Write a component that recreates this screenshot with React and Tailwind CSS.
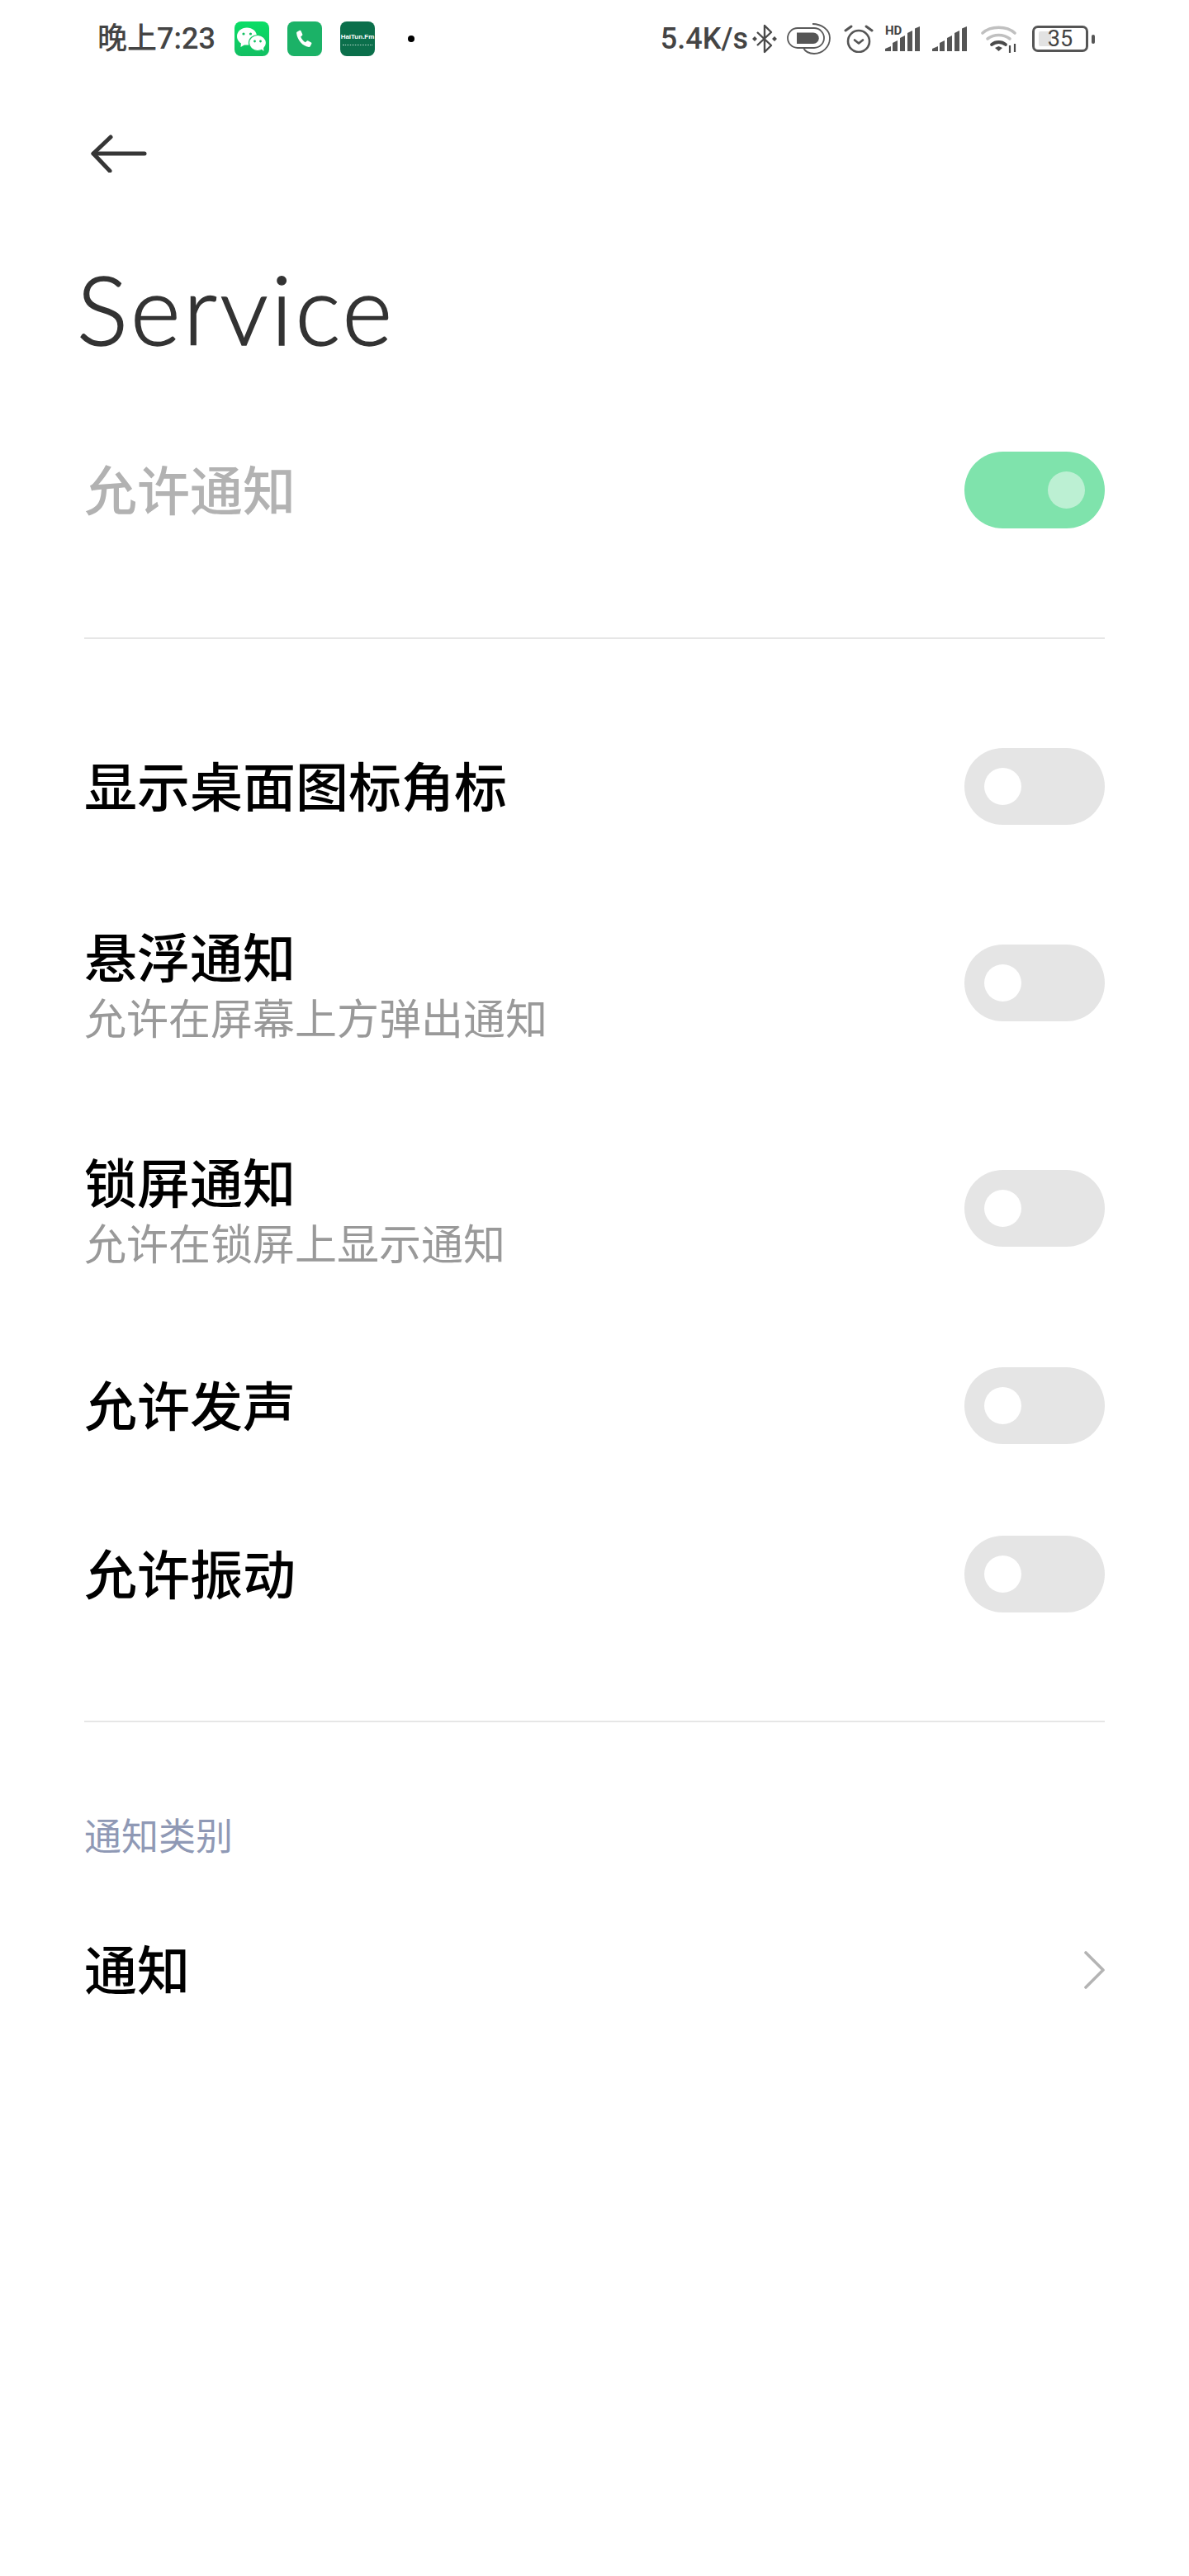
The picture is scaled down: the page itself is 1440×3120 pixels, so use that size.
const CJK = 'font-["Noto_Sans_CJK_SC",sans-serif]';

// Toggle: the first row is on and greyed out, all the others are off
const Toggle = ({ on }) => (
  <div
    className={`flex h-[93px] w-[170px] shrink-0 items-center rounded-full px-[24px] ${
      on ? 'justify-end bg-[#7fe3ac]' : 'justify-start bg-[#e5e5e5]'
    }`}
  >
    <div className={`h-[45px] w-[45px] rounded-full ${on ? 'bg-[#bcf0d3]' : 'bg-white'}`} />
  </div>
);

const Row = ({ title, sub, on, muted, className }) => (
  <div className={`flex items-center justify-between ${className}`}>
    <div className={sub ? 'mt-[5px]' : 'mb-[8px]'}>
      <div className={`text-[64px] leading-[76px] font-medium ${muted ? 'text-[#b2b2b2]' : 'text-black'}`}>{title}</div>
      {sub && <div className="text-[51px] leading-[74px] text-[#999999]">{sub}</div>}
    </div>
    <Toggle on={on} />
  </div>
);

const WeChatIcon = () => (
  <svg width="42" height="42" viewBox="0 0 42 42">
    <defs>
      <linearGradient id="wx" x1="0" y1="0" x2="0" y2="1">
        <stop offset="0" stopColor="#0ade66" />
        <stop offset="1" stopColor="#12bf62" />
      </linearGradient>
    </defs>
    <rect width="42" height="42" rx="8" fill="url(#wx)" />
    <ellipse cx="15" cy="18" rx="12" ry="10.5" fill="#fff" />
    <path d="M8 25l-.5 6 6-3.5z" fill="#fff" />
    <ellipse cx="28" cy="26" rx="10.5" ry="9.5" fill="#fff" stroke="#10c863" strokeWidth="1.2" />
    <path d="M32 33l3.5 3-.5-5z" fill="#fff" />
    <circle cx="11" cy="15" r="1.6" fill="#12bf62" />
    <circle cx="19.5" cy="15" r="1.6" fill="#12bf62" />
    <circle cx="24.5" cy="24" r="1.4" fill="#12bf62" />
    <circle cx="31.5" cy="24" r="1.4" fill="#12bf62" />
  </svg>
);

const PhoneIcon = () => (
  <svg width="42" height="42" viewBox="0 0 42 42">
    <rect width="42" height="42" rx="8" fill="#1bb267" />
    <path
      d="M12 12.4l3-1.6c.7-.3 1.2 0 1.5.6l1.8 4.2c.2.6.1 1-.3 1.4l-1.8 1.6c1 2.9 3 5.2 5.6 6.6l2-1.6c.5-.4 1-.4 1.5-.1l3.6 2.1c.6.3.7.9.4 1.5l-1.5 2.9c-.4.7-1 1-1.8.9C18.4 29.8 12 22.4 11.1 13.9c-.1-.7.3-1.2.9-1.5z"
      fill="#fff"
    />
  </svg>
);

const HaiTunIcon = () => (
  <div className="flex h-[42px] w-[42px] flex-col items-center justify-center rounded-[8px] bg-[#0b6f4b]">
    <span className="font-['Liberation_Sans',sans-serif] text-[8px] leading-[10px] font-bold whitespace-nowrap text-white">HaiTun.Fm</span>
    <div className="mt-[4px] h-px w-[36px] border-t border-dotted border-[#b9d8cb]" />
  </div>
);

const BluetoothIcon = () => (
  <svg width="30" height="36" viewBox="0 0 30 36" fill="none" stroke="#4a4a4a" strokeWidth="2.4" strokeLinejoin="round">
    <path d="M6 10l17 16-8 8V2l8 8L6 26" />
    <path d="M0 18l3-3 3 3-3 3zM24 18l3-3 3 3-3 3z" fill="#4a4a4a" stroke="none" />
  </svg>
);

const ChipIcon = () => (
  <svg width="53" height="38" viewBox="0 0 53 38" fill="none" stroke="#5a5a5a" strokeWidth="1.8">
    <rect x="1" y="6" width="44" height="24" rx="12" />
    <path d="M12 11.5h20a6.500 6.500 0 0 1 0 13.500H12z" fill="#555" stroke="none" />
    <path d="M31 1c11 0 21 7 21 17 0 11-9 19-19 19-7 0-11-3-13-7" />
  </svg>
);

const AlarmIcon = () => (
  <svg width="36" height="34" viewBox="0 0 36 34" fill="none" stroke="#555" strokeWidth="2.6" strokeLinecap="round" strokeLinejoin="round">
    <circle cx="18" cy="20" r="13" />
    <path d="M13 18.500l5 4 5-4" />
    <path d="M2 7l7-5M34 7l-7-5" strokeWidth="3" />
  </svg>
);

const SignalBars = () => (
  <svg width="43" height="30" viewBox="0 0 43 30" fill="#555" className="block">
    <path d="M0 30v-3l7-3v6z" />
    <path d="M9 30V20l6-3v13z" />
    <path d="M18 30V14l6-3v19z" />
    <path d="M27 30V8l6-3v25z" />
    <path d="M36 30V2.500l6-2.500v30z" />
  </svg>
);

const WifiIcon = () => (
  <svg width="45" height="33" viewBox="0 0 45 33" fill="none" strokeLinecap="round" className="block">
    <path d="M2 9c10-9 29-9 39 0" stroke="#c0c0c0" strokeWidth="3.6" />
    <path d="M8 16c8-6 19-6 27 0" stroke="#c0c0c0" strokeWidth="3.6" />
    <path d="M13 23c5-4 12-4 17 0" stroke="#4a4a4a" strokeWidth="3.8" />
    <path d="M17 27l4.500-2 4.500 2-4.500 4z" fill="#4a4a4a" />
    <path d="M35 24v9M41 22v10" stroke="#4a4a4a" strokeWidth="2.2" strokeLinecap="butt" />
  </svg>
);

const Battery = () => (
  <div className="flex items-center">
    <div className="relative flex h-[32px] w-[68px] items-center justify-center rounded-[7px] border-[3px] border-[#555]">
      <div className="absolute top-[4px] bottom-[4px] left-[5px] w-[15px] rounded-[2px] bg-[#e2e2e2]" />
      <span className="relative font-['Roboto',sans-serif] text-[27px] leading-none text-[#444]">35</span>
    </div>
    <div className="ml-[4px] h-[11px] w-[4px] rounded-[2px] bg-[#555]" />
  </div>
);

const StatusBar = () => (
  <div className="flex h-[94px] items-center justify-between pr-[114px] pl-[118px] text-[#444]">
    <div className="flex items-center">
      <span className="w-[166px] font-['Roboto','Noto_Sans_CJK_SC',sans-serif] text-[36px] font-medium whitespace-nowrap">晚上7:23</span>
      <WeChatIcon />
      <div className="ml-[22px]"><PhoneIcon /></div>
      <div className="ml-[22px]"><HaiTunIcon /></div>
      <div className="ml-[40px] h-[8px] w-[8px] rounded-full bg-black" />
    </div>
    <div className="flex items-center">
      <span className="font-['Roboto',sans-serif] text-[36px] font-medium whitespace-nowrap">5.4K/s</span>
      <div className="ml-[5px]"><BluetoothIcon /></div>
      <div className="ml-[12px]"><ChipIcon /></div>
      <div className="ml-[16px]"><AlarmIcon /></div>
      <div className="relative ml-[14px]">
        <span className="absolute top-0 left-0 font-['Roboto',sans-serif] text-[15px] leading-[11px] font-bold">HD</span>
        <SignalBars />
      </div>
      <div className="ml-[14px]"><SignalBars /></div>
      <div className="ml-[16px]"><WifiIcon /></div>
      <div className="ml-[17px]"><Battery /></div>
    </div>
  </div>
);

export default function App() {
  return (
    <div className={`min-h-[3120px] w-[1440px] bg-white ${CJK}`}>
      <StatusBar />

      <div className="pt-[69px] pl-[110px]">
        <svg width="68" height="46" viewBox="0 0 68 46" fill="none" stroke="#363636" strokeWidth="5" strokeLinecap="round" strokeLinejoin="round">
          <path d="M3 23h62" />
          <path d="M24 3L3 23l20 21" />
        </svg>
      </div>

      <h1 className="mt-[90px] pl-[93px] font-['Lato',sans-serif] text-[116px] leading-[150px] font-light tracking-[3.5px] text-[#333] [-webkit-text-stroke:1.5px_#333]">Service</h1>

      <div className="px-[102px]">
        <Row title="允许通知" on muted className="mt-[98px] h-[93px]" />
        <div className="mt-[132px] h-[2px] bg-[#e6e6e6]" />

        <Row title="显示桌面图标角标" className="mt-[132px] h-[93px]" />
        <Row title="悬浮通知" sub="允许在屏幕上方弹出通知" className="mt-[145px] h-[93px]" />
        <Row title="锁屏通知" sub="允许在锁屏上显示通知" className="mt-[180px] h-[93px]" />
        <Row title="允许发声" className="mt-[146px] h-[93px]" />
        <Row title="允许振动" className="mt-[111px] h-[93px]" />

        <div className="mt-[131px] h-[2px] bg-[#e6e6e6]" />

        <div className="mt-[104px] text-[45px] leading-[64px] text-[#8f99b5]">通知类别</div>

        <div className="mt-[92px] flex h-[80px] items-center justify-between">
          <span className="mb-[8px] text-[64px] leading-[76px] font-medium text-black">通知</span>
          <svg width="26" height="46" viewBox="0 0 26 46" fill="none" stroke="#b4b4b4" strokeWidth="3.6" strokeLinecap="round" strokeLinejoin="round">
            <path d="M3 2l21 21L3 44" />
          </svg>
        </div>
      </div>
    </div>
  );
}
